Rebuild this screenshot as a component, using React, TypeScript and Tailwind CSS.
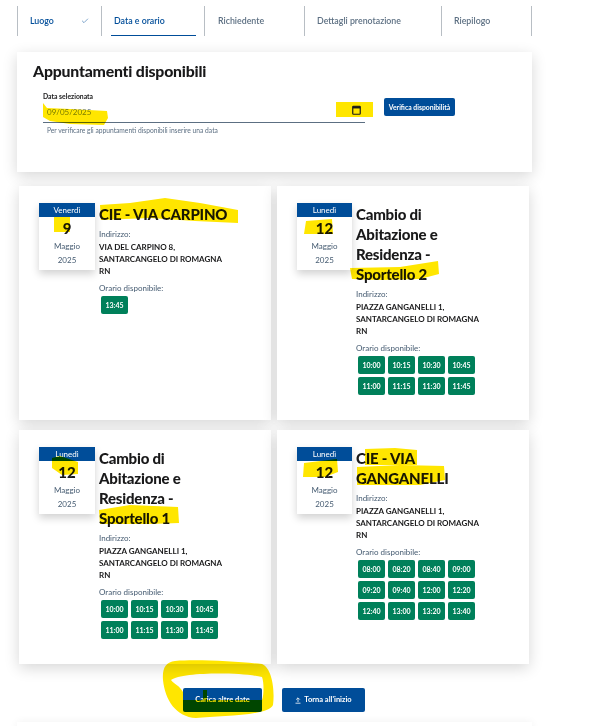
import React from 'react';
import { Check } from 'lucide-react';

type Appointment = {
  day: string;
  num: string;
  title: string[];
  address: string[];
  slots: string[][];
};

const appointments: Appointment[] = [
  {
    day: 'Venerdì',
    num: '9',
    title: ['CIE - VIA CARPINO'],
    address: ['VIA DEL CARPINO 8,', 'SANTARCANGELO DI ROMAGNA', 'RN'],
    slots: [['13:45']],
  },
  {
    day: 'Lunedì',
    num: '12',
    title: ['Cambio di', 'Abitazione e', 'Residenza -', 'Sportello 2'],
    address: ['PIAZZA GANGANELLI 1,', 'SANTARCANGELO DI ROMAGNA', 'RN'],
    slots: [
      ['10:00', '10:15', '10:30', '10:45'],
      ['11:00', '11:15', '11:30', '11:45'],
    ],
  },
  {
    day: 'Lunedì',
    num: '12',
    title: ['Cambio di', 'Abitazione e', 'Residenza -', 'Sportello 1'],
    address: ['PIAZZA GANGANELLI 1,', 'SANTARCANGELO DI ROMAGNA', 'RN'],
    slots: [
      ['10:00', '10:15', '10:30', '10:45'],
      ['11:00', '11:15', '11:30', '11:45'],
    ],
  },
  {
    day: 'Lunedì',
    num: '12',
    title: ['CIE - VIA', 'GANGANELLI'],
    address: ['PIAZZA GANGANELLI 1,', 'SANTARCANGELO DI ROMAGNA', 'RN'],
    slots: [
      ['08:00', '08:20', '08:40', '09:00'],
      ['09:20', '09:40', '12:00', '12:20'],
      ['12:40', '13:00', '13:20', '13:40'],
    ],
  },
];

const steps = [
  { label: 'Luogo', w: 'w-[84px]', pl: 'pl-[12px]', color: 'text-[#004d99]', done: true },
  { label: 'Data e orario', w: 'w-[103px]', pl: 'pl-[12px]', color: 'text-[#004d99]', active: true },
  { label: 'Richiedente', w: 'w-[100px]', pl: 'pl-[13px]', color: 'text-[#5c6f82]' },
  { label: 'Dettagli prenotazione', w: 'w-[137px]', pl: 'pl-[12px]', color: 'text-[#5c6f82]' },
  { label: 'Riepilogo', w: 'w-[90px]', pl: 'pl-[12px]', color: 'text-[#5c6f82]' },
];

const AppointmentCard: React.FC<{ item: Appointment; narrow: boolean }> = ({ item, narrow }) => (
  <div className="flex h-[234px] bg-white pl-[20px] pt-[17px] shadow-[0_4px_14px_rgba(0,0,0,0.16)]">
    <div
      className={`h-[67px] shrink-0 bg-white text-center shadow-[0_4px_8px_rgba(0,0,0,0.18)] ${narrow ? 'w-[55px]' : 'w-[56px]'}`}
    >
      <div className="h-[14px] bg-[#004d99] text-[8px] leading-[14px] text-white">{item.day}</div>
      <div className="h-[19px] text-[15px] font-black leading-[23px] text-[#19191a]">{item.num}</div>
      <div className="mt-[3px] text-[8px] leading-[14px] text-[#455b71]">Maggio</div>
      <div className="text-[8px] leading-[14px] text-[#455b71]">2025</div>
    </div>
    <div className="ml-[4px] min-w-0">
      <h3 className="pt-[1px] text-[15px] font-black leading-[20px] tracking-[-0.2px] text-[#19191a]">
        {item.title.map((line) => (
          <div key={line}>{line}</div>
        ))}
      </h3>
      <div className="mt-[3px] text-[8px] leading-[14px] text-[#455b71]">Indirizzo:</div>
      <div className="text-[8px] font-bold leading-[12px] text-[#19191a]">
        {item.address.map((line) => (
          <div key={line}>{line}</div>
        ))}
      </div>
      <div className="mt-[4px] text-[8px] leading-[14px] text-[#455b71]">Orario disponibile:</div>
      <div className="ml-[2px] mt-[1px] flex flex-col gap-[3px]">
        {item.slots.map((row) => (
          <div key={row.join()} className="flex gap-[3px]">
            {row.map((time) => (
              <div
                key={time}
                className="h-[18px] w-[27px] rounded-[2px] bg-[#00805a] text-center text-[7px] font-bold leading-[18px] text-white"
              >
                {time}
              </div>
            ))}
          </div>
        ))}
      </div>
    </div>
  </div>
);

export default function App() {
  return (
    <div className="relative h-[726px] w-[612px] overflow-hidden bg-white font-['Lato',sans-serif]">
      {/* Stepper */}
      <nav className="ml-[17px] flex h-[36px] pt-[6px]">
        {steps.map((step) => (
          <div
            key={step.label}
            className={`relative flex h-[30px] items-center border-l border-[#b8bec4] text-[8.8px] font-semibold ${step.w} ${step.pl} ${step.color}`}
          >
            {step.label}
            {step.done && <Check className="absolute left-[63px] top-[11px] h-[8px] w-[8px]" strokeWidth={1.5} />}
            {step.active && <span className="absolute bottom-0 left-[9px] h-px w-[85px] bg-[#004d99]" />}
          </div>
        ))}
        <div className="h-[30px] border-l border-[#b8bec4]" />
      </nav>

      {/* Date search */}
      <section className="ml-[17px] mt-[16px] h-[120px] w-[515px] bg-white pl-[16px] pt-[9px] shadow-[0_4px_14px_rgba(0,0,0,0.16)]">
        <h2 className="text-[15.8px] font-black leading-[20px] tracking-[-0.2px] text-[#19191a]">
          Appuntamenti disponibili
        </h2>
        <div className="ml-[10px] mt-[8px] flex">
          <div className="w-[322px]">
            <div className="text-[6.8px] font-bold leading-[14px] text-[#19191a]">Data selezionata</div>
            <div className="relative h-[20px] border-b border-[#5c6f82] pl-[4px] text-[8px] leading-[18px] text-[#7a8a9a]">
              09/05/2025
              <span className="absolute right-[-8px] top-[-1px] flex h-[15px] w-[37px] items-center justify-center bg-[#ffe600] pl-[3px]">
                <svg width="9" height="10" viewBox="0 0 9 10" fill="none">
                  <rect x="0.75" y="1.25" width="7.5" height="8" rx="0.8" stroke="#1a1a1a" strokeWidth="1.2" />
                  <rect x="0.75" y="1.25" width="7.5" height="2.2" fill="#1a1a1a" />
                </svg>
              </span>
            </div>
            <div className="pl-[4px] text-[6.7px] leading-[14px] text-[#5c6f82]">
              Per verificare gli appuntamenti disponibili inserire una data
            </div>
          </div>
          <button className="ml-[19px] mt-[9px] h-[18px] w-[71px] rounded-[2px] bg-[#004d99] text-[6.8px] font-bold text-white">
            Verifica disponibilità
          </button>
        </div>
      </section>

      {/* Results */}
      <div className="ml-[19px] mt-[14px] grid w-[510px] grid-cols-2 gap-x-[6px] gap-y-[10px]">
        {appointments.map((item, i) => (
          <AppointmentCard key={i} item={item} narrow={i % 2 === 1} />
        ))}
      </div>

      <div className="ml-[183px] mt-[24px] flex gap-[20px]">
        <button className="h-[24px] w-[79px] rounded-[2px] bg-[#004d99] text-[7.5px] font-bold text-white">
          Carica altre date
        </button>
        <button className="flex h-[24px] w-[83px] items-center justify-center gap-[3px] rounded-[2px] bg-[#004d99] text-[7.5px] font-bold text-white">
          <svg width="6" height="7" viewBox="0 0 6 7" fill="none" stroke="white" strokeWidth="0.8">
            <path d="M3 5V1M1.2 2.6 3 0.8l1.8 1.8M0.5 6.2h5" />
          </svg>
          Torna all'inizio
        </button>
      </div>
      <div className="ml-[17px] mt-[10px] h-[20px] w-[515px] bg-white shadow-[0_0_8px_rgba(0,0,0,0.06)]" />

      {/* Yellow marker strokes drawn over the page */}
      <svg className="pointer-events-none absolute left-0 top-0 mix-blend-multiply" width="612" height="726" fill="#ffe600">
        <path d="M43 103 L47 108 L70 109 L107 111 L108 118 L104 125 L70 124 L50 121 L43 117Z" />
        <path d="M100 205 L130 203 L165 198 L200 203 L238 210 L238 223 L195 221 L150 218 L101 220Z" />
        <path d="M54 217H70V232H54Z" />
        <path d="M306 221L332 219L333 234L304 234Z" />
        <path d="M350 268L400 267L438 261L439 274L420 279L380 280L352 279Z" />
        <path d="M52 458L60 456L78 462L78 474L62 475L52 468Z" />
        <path d="M99 510L130 505L178 507L179 523L150 524L100 524Z" />
        <path d="M304 463L337 459L338 472L325 477L303 477Z" />
        <path d="M365 449L395 448L417 450L417 465L365 465Z" />
        <path d="M357 467L400 465L444 466L445 480L420 485L357 485Z" />
        <path
          fillRule="evenodd"
          d="M175 661C200 659 240 662 262 664C272 668 275 690 273 705C268 716 220 716 196 718C176 717 165 700 163 680C162 668 166 662 175 661ZM171 680C182 672 240 672 262 677C264 682 264 695 262 700H207V690H203V700H183V692C180 686 174 684 171 680Z"
        />
      </svg>
    </div>
  );
}
